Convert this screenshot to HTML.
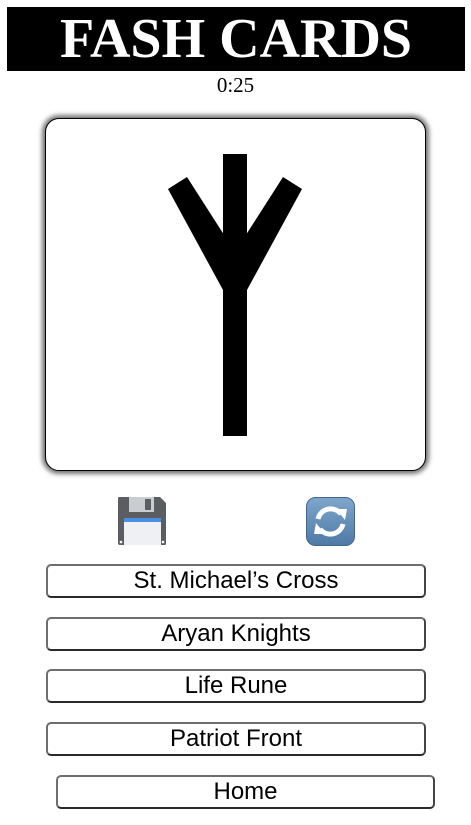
<!DOCTYPE html>
<html><head><meta charset="utf-8"><style>
html,body{margin:0;padding:0;background:#fff;width:471px;height:825px;overflow:hidden;position:relative}
.hdr{position:absolute;left:7px;top:7px;width:458px;height:64px;background:#000;color:#fff;font-family:"Liberation Serif",serif;font-weight:bold;font-size:56px;line-height:64px;text-align:center}
.tm{position:absolute;left:0;width:471px;top:73px;text-align:center;font-family:"Liberation Serif",serif;font-size:21px;line-height:24px}
.card{position:absolute;left:45px;top:118px;width:379px;height:351px;border:1px solid #000;border-radius:14px;box-shadow:0 0 5px 3px rgba(0,0,0,.55);background:#fff}
.btn{position:absolute;box-sizing:border-box;border:2px solid #6e6e6e;border-bottom-color:#2a2a2a;border-right-color:#444;border-radius:5px;background:#fff;font-family:"Liberation Sans",sans-serif;font-size:24px;text-align:center;line-height:30px;color:#000}
</style></head><body>
<div class="hdr">FASH CARDS</div>
<div class="tm">0:25</div>
<div class="card"></div>
<svg style="position:absolute;left:0;top:0" width="471" height="500">
<rect x="223" y="154" width="24" height="282" fill="#000"/>
<polygon points="168,189 187,177 235,252 235,290 223,290" fill="#000"/>
<polygon points="302,189 283,177 235,252 235,290 247,290" fill="#000"/>
</svg>
<svg style="position:absolute;left:117px;top:497px" width="50" height="49" viewBox="0 0 50 49">
<path d="M2 0 H43 L49 6 V47 Q49 48 47 48 H3 Q1 48 1 46 V2 Q1 0 2 0Z" fill="#5a5e63"/>
<rect x="12" y="0" width="25" height="15" fill="#c9ccd0"/>
<rect x="28" y="2" width="6" height="11" fill="#5a5e63"/>
<rect x="7" y="21" width="37" height="27" fill="#eef0f3"/>
<rect x="7" y="21" width="37" height="4" fill="#4a8fe0"/>
<circle cx="4" cy="45" r="1.3" fill="#fff"/><circle cx="46" cy="45" r="1.3" fill="#fff"/>
</svg>
<svg style="position:absolute;left:306px;top:497px" width="49" height="49" viewBox="0 0 49 49">
<defs><linearGradient id="g" x1="0" y1="0" x2="0" y2="1"><stop offset="0" stop-color="#7fa6cc"/><stop offset="1" stop-color="#4f7aa6"/></linearGradient></defs>
<rect x="0.5" y="0.5" width="48" height="48" rx="9" fill="url(#g)" stroke="#3f6890"/>
<path d="M12 22 A13 13 0 0 1 35 17" fill="none" stroke="#fff" stroke-width="5"/>
<polygon points="30,12 41,12 39,23" fill="#fff"/>
<path d="M37 27 A13 13 0 0 1 14 32" fill="none" stroke="#fff" stroke-width="5"/>
<polygon points="19,37 8,37 10,26" fill="#fff"/>
</svg>
<div class="btn" style="left:46px;top:564px;width:380px;height:34px">St. Michael’s Cross</div>
<div class="btn" style="left:46px;top:617px;width:380px;height:34px">Aryan Knights</div>
<div class="btn" style="left:46px;top:669px;width:380px;height:34px">Life Rune</div>
<div class="btn" style="left:46px;top:722px;width:380px;height:34px">Patriot Front</div>
<div class="btn" style="left:56px;top:775px;width:379px;height:34px">Home</div>
</body></html>
